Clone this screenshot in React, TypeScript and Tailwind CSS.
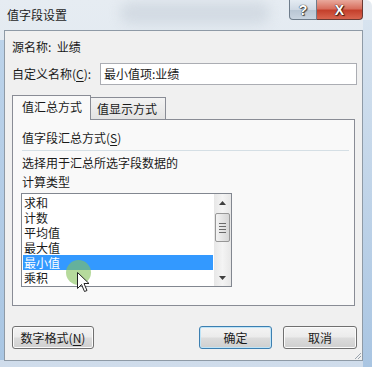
import React from "react";

const items = ["求和", "计数", "平均值", "最大值", "最小值", "乘积"];

function Btn({ children, w, focused }: { children: React.ReactNode; w: string; focused?: boolean }) {
  return (
    <div
      className={`${w} h-[23px] rounded-[3px] border flex items-center justify-center bg-[linear-gradient(to_bottom,#f4f4f4_0%,#ebebeb_48%,#dcdcdc_52%,#cfcfcf_100%)] ${
        focused ? "border-[#3c7fb1] shadow-[inset_0_0_0_1px_#bfe4f7]" : "border-[#707070] shadow-[inset_0_0_0_1px_#fbfbfb]"
      }`}
    >
      {children}
    </div>
  );
}

export default function App() {
  return (
    <div className="relative w-[372px] h-[367px] overflow-hidden rounded-tr-[6px] bg-[linear-gradient(to_bottom,#e6ecf2_0%,#dde6ef_40%,#cfdceb_100%)] text-[12px] text-[#1a1a1a] font-['Microsoft_YaHei','Noto_Sans_CJK_SC',sans-serif]">
      {/* blurred desktop glimpses */}
      <div className="absolute left-[120px] top-[2px] w-[150px] h-[22px] rounded-full bg-[#c7d0da] opacity-60 blur-[6px]" />
      <div className="absolute left-0 top-[40px] w-[4px] h-[320px] bg-[linear-gradient(to_bottom,#bcd3ea,#a9c6e3)]" />
      <div className="absolute right-0 top-[20px] w-[9px] h-[347px] bg-[linear-gradient(to_bottom,#d7e3ef,#a9c5e2)]" />

      {/* title bar */}
      <div className="relative h-[30px] flex items-start">
        <span className="pl-[7px] pt-[7px] leading-[16px] text-[12px] text-[#1e1e1e]">值字段设置</span>
        <div className="ml-auto mr-[9px] flex">
          <div className="w-[28px] h-[20px] rounded-bl-[4px] border border-t-0 border-[#6e7c8b] bg-[linear-gradient(to_bottom,#e4ebf2_0%,#cfd9e4_50%,#b8c5d3_51%,#c9d4e0_100%)] flex items-center justify-center">
            <span className="text-[14px] leading-none font-bold text-white [text-shadow:0_0_1px_#333,0_0_1px_#333,1px_1px_1px_#444] font-['Liberation_Sans',sans-serif]">?</span>
          </div>
          <div className="w-[46px] h-[20px] rounded-br-[4px] border border-l-0 border-t-0 border-[#6b3a33] bg-[linear-gradient(to_bottom,#e9a99c_0%,#d8705f_45%,#c4402c_55%,#d8654f_100%)] flex items-center justify-center">
            <span className="text-[14px] leading-none font-bold text-white [text-shadow:0_0_1px_#3a1a14,0_0_1px_#3a1a14,1px_1px_1px_#3a1a14] font-['Liberation_Sans',sans-serif]">X</span>
          </div>
        </div>
      </div>

      {/* client area */}
      <div className="relative ml-[4px] mr-[9px] h-[331px] bg-[#f0f0f0] border border-[#8e9aa6] flex flex-col">
        <div className="mt-[8px] pl-[7px] leading-[16px]">源名称:&nbsp;&nbsp;业绩</div>

        <div className="mt-[8px] h-[22px] flex items-center pl-[7px] pr-[5px]">
          <span className="leading-[16px]">
            自定义名称(<span className="underline underline-offset-2">C</span>):
          </span>
          <div className="ml-auto w-[257px] h-[22px] border border-[#abadb3] bg-white flex items-center pl-[3px] leading-[16px]">
            最小值项:业绩
          </div>
        </div>

        {/* tabs */}
        <div className="mt-[10px] ml-[7px] h-[24px] flex items-end relative z-10">
          <div className="w-[79px] h-[25px] -mb-[1px] border border-b-0 border-[#898c95] bg-[#f9f9f9] pl-[9px] pt-[3px] leading-[16px]">
            值汇总方式
          </div>
          <div className="w-[75px] h-[22px] border border-l-0 border-b-0 border-[#898c95] bg-[linear-gradient(to_bottom,#f3f3f3,#e3e3e3)] pl-[6px] pt-[3px] leading-[16px]">
            值显示方式
          </div>
        </div>

        {/* panel */}
        <div className="ml-[7px] mr-[7px] h-[187px] border border-[#898c95] bg-[#f9f9f9] flex flex-col">
          <div className="mt-[10px] pl-[9px] leading-[16px]">
            值字段汇总方式(<span className="underline underline-offset-2">S</span>)
          </div>
          <div className="mt-[4px] ml-[9px] mr-[5px] h-px bg-[#d5dfe5]" />
          <div className="mt-[2px] pl-[9px] leading-[19px]">
            <div>选择用于汇总所选字段数据的</div>
            <div>计算类型</div>
          </div>
          <div className="mt-[2px] ml-[8px] w-[211px] h-[94px] border border-[#828790] bg-white flex">
            <div className="flex-1 pt-[1px] overflow-hidden">
              {items.map((it) => (
                <div key={it} className="h-[15px] flex">
                  {it === "最小值" ? (
                    <div className="flex-1 mx-[1px] bg-[#3399ff] text-white pl-[1px] leading-[15px]">{it}</div>
                  ) : (
                    <div className="pl-[2px] leading-[15px]">{it}</div>
                  )}
                </div>
              ))}
            </div>
            <div className="w-[17px] bg-[linear-gradient(to_right,#e7e7e7,#f4f4f4,#e7e7e7)] flex flex-col items-center">
              <div className="h-[17px] flex items-center justify-center">
                <svg width="7" height="4" viewBox="0 0 7 4">
                  <path d="M3.5 0 L7 4 L0 4 Z" fill="#404040" />
                </svg>
              </div>
              <div className="mt-[2px] w-[15px] h-[29px] rounded-[2px] border border-[#979797] bg-[linear-gradient(to_right,#f3f3f3,#e4e4e4_50%,#d6d6d6)] flex flex-col items-center justify-center gap-[2px]">
                <div className="w-[7px] h-px bg-[#6a6a6a]" />
                <div className="w-[7px] h-px bg-[#6a6a6a]" />
                <div className="w-[7px] h-px bg-[#6a6a6a]" />
                <div className="w-[7px] h-px bg-[#6a6a6a]" />
              </div>
              <div className="mt-auto h-[17px] flex items-center justify-center">
                <svg width="7" height="4" viewBox="0 0 7 4">
                  <path d="M0 0 L7 0 L3.5 4 Z" fill="#404040" />
                </svg>
              </div>
            </div>
          </div>
        </div>

        {/* buttons */}
        <div className="mt-[20px] ml-[7px] mr-[5px] flex">
          <Btn w="w-[82px]">
            <span className="leading-[16px]">
              数字格式(<span className="underline underline-offset-2">N</span>)
            </span>
          </Btn>
          <div className="ml-auto">
            <Btn w="w-[73px]" focused>
              <span className="leading-[16px]">确定</span>
            </Btn>
          </div>
          <div className="ml-[11px]">
            <Btn w="w-[74px]">
              <span className="leading-[16px]">取消</span>
            </Btn>
          </div>
        </div>

        {/* resize grip */}
        <svg className="absolute right-0 bottom-0" width="10" height="10" viewBox="0 0 10 10">
          <path d="M9 3 L3 9 M9 6 L6 9" stroke="#9aa4ae" strokeWidth="1" />
        </svg>
      </div>

      {/* click highlight + cursor */}
      <div className="absolute left-[66px] top-[260px] w-[25px] h-[25px] rounded-full bg-[#86c25a] opacity-60" />
      <svg className="absolute left-[77px] top-[272px]" width="13" height="21" viewBox="0 0 13 21">
        <path d="M0.5 0.5 L0.5 16.5 L4.5 12.5 L7.5 19.5 L10 18.5 L7 11.5 L12 11.5 Z" fill="white" stroke="#222" strokeWidth="1" strokeLinejoin="round" />
      </svg>
    </div>
  );
}
